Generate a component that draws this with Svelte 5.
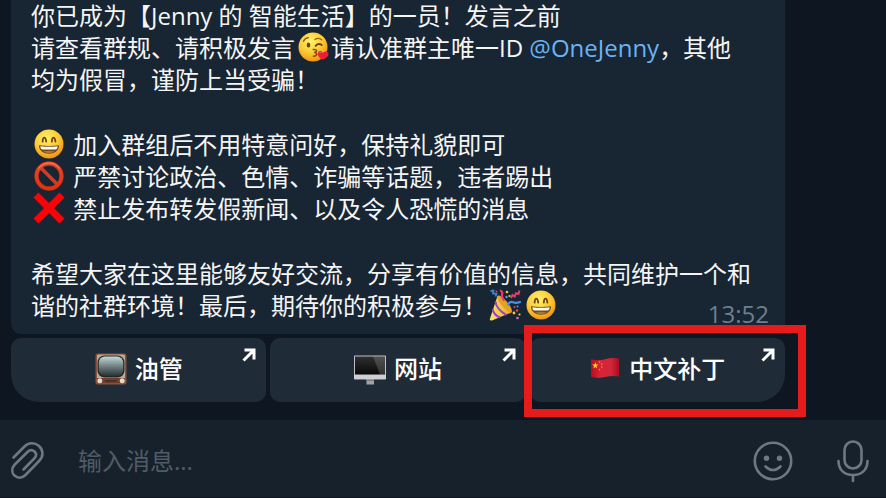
<script lang="ts">
  let draft = $state('');
</script>

{#snippet face()}
  <circle cx="16" cy="16" r="14.5" fill="url(#face-fill)" />
{/snippet}

{#snippet grin()}
  <svg class="emoji" viewBox="0 0 32 32" role="img" aria-label="😄">
    {@render face()}
    <path d="M9.6 13.6q.2-4 1.7-4t1.900 4M18.800 13.600q.2-4 1.700-4t1.900 4" fill="none" stroke="#704312" stroke-width="1.800" stroke-linecap="round" />
    <path d="M6 17.200q10 1.600 20 0c.2 5.500-4.500 8.500-10 8.500S5.800 22.700 6 17.200z" fill="#74481a" />
    <path d="M7.400 18.200q8.600 1.200 17.200 0c0 2-.6 2.700-1.600 3.200H9c-1-.5-1.600-1.200-1.600-3.200z" fill="#fffdf2" />
    <path d="M10 23.500q6-1.400 12 0-6 3-12 0z" fill="#a87935" />
  </svg>
{/snippet}

{#snippet kiss()}
  <svg class="emoji" viewBox="0 0 32 32" role="img" aria-label="😘">
    {@render face()}
    <path d="M6.500 10.300q1.500-3.400 5-3.600M18 8.500q3.500-2.500 6.500.2" fill="none" stroke="#96600d" stroke-width="1.300" stroke-linecap="round" />
    <ellipse cx="11.500" cy="14" rx="1.800" ry="2.500" fill="#69400e" />
    <path d="M18.600 14.800q3.200-3.300 6.200-.6" fill="none" stroke="#69400e" stroke-width="1.800" stroke-linecap="round" />
    <path d="M16.300 18.500c4-.5 4.500 2.300 1 2.900 3.500.3 3.200 3.700-.8 3.800" fill="none" stroke="#8c4a12" stroke-width="1.500" stroke-linecap="round" />
    <path d="M25.600 28.800c-4.600-2.600-5.300-5.200-4.500-7.200 1-2.200 3.700-1.900 4.600.4 1.600-2.100 4.600-2.200 5.600.1 1.100 2.600-1.500 4.700-5.700 6.700z" fill="#ee1c35" />
    <path d="M22.400 22q.8-1.200 1.800-.2" fill="none" stroke="#ff8290" stroke-width="1" />
  </svg>
{/snippet}

{#snippet forbidden()}
  <svg class="emoji" viewBox="0 0 32 32" role="img" aria-label="🚫">
    <circle cx="16" cy="16" r="12.500" fill="none" stroke="#b52810" stroke-width="4.400" />
    <path d="m7.500 7.500 17 17" stroke="#d83a20" stroke-width="3.600" />
    <circle cx="16" cy="16" r="12.500" fill="none" stroke="url(#ban-fill)" stroke-width="3.400" />
    <path d="M5.500 8.500Q9.500 3 16 3t10.500 5.500" fill="none" stroke="#f5a38c" stroke-width="1" opacity=".7" />
  </svg>
{/snippet}

{#snippet cross()}
  <svg class="emoji" viewBox="0 0 32 32" role="img" aria-label="❌">
    <path d="M.5 5.500 5.500.500 16 11 26.500.500l5 5L21 16l10.500 10.500-5 5L16 21 5.500 31.500l-5-5L11 16z" fill="#fb0207" />
  </svg>
{/snippet}

{#snippet party()}
  <svg class="emoji" viewBox="0 0 32 32" role="img" aria-label="🎉">
    <path d="M8.500 7 22.500 23.500 3 31.500q-2.500.5-2-2z" fill="url(#cone-fill)" />
    <path d="M6.500 12.500Q7 20 17.500 26M3.600 20q1 6 7.500 8.500" fill="none" stroke="#9a42c8" stroke-width="2" />
    <ellipse cx="15.600" cy="15" rx="3.200" ry="10.700" transform="rotate(-40 15.600 15)" fill="#e3a224" />
    <path d="M14.500 12c1-3-3-3-1.500-6.500S11 3 12 .800" fill="none" stroke="#e93b68" stroke-width="2.200" />
    <path d="M19 15.500q2-3.500 5-2.200t7-.3" fill="none" stroke="#4492e8" stroke-width="2.200" stroke-linecap="round" />
    <path d="m22 9 1.500-3 2.200 1.500L27 4.200l2.500.8 1-3.500" fill="none" stroke="#df406d" stroke-width="2" />
    <path d="m1.500 2 3-.5-.5 3 3.500.5-1 2.500" fill="none" stroke="#3982dc" stroke-width="1.800" />
    <g fill="#e9405f"><circle cx="7.500" cy="2.500" r="1" /><circle cx="28" cy="21.500" r="1.200" /><circle cx="25.500" cy="18" r="1" /></g>
    <g fill="#f8c53b"><circle cx="18" cy="3" r="1.300" /><circle cx="20.500" cy="7" r="1.100" /><circle cx="25" cy="24" r="1.400" /><circle cx="30.500" cy="25.500" r="1.100" /></g>
    <g fill="#4c9bee"><circle cx="17.500" cy="8" r="1.200" /><circle cx="28.500" cy="17.500" r="1" /></g>
    <circle cx="28.500" cy="29" r="1.300" fill="#d96dcc" />
  </svg>
{/snippet}

{#snippet tv()}
  <svg class="emoji" viewBox="0 0 32 32" aria-hidden="true">
    <rect x=".5" y=".5" width="31" height="31" rx="2.500" fill="#8b5140" />
    <path d="M2 3q0-1.500 1.500-1.500h25Q30 1.500 30 3v22H2z" fill="#b9aa96" />
    <path d="M2 25h28v5H2z" fill="#713e2d" />
    <rect x="2.500" y="2.500" width="27" height="22" rx="7" fill="#202829" />
    <rect x="3.800" y="3.500" width="24.400" height="19.500" rx="6" fill="url(#screen-fill)" />
    <path d="M10 27h12v2H10z" fill="#49322a" />
    <circle cx="4.800" cy="27.800" r="2.500" fill="#e7d9c0" />
    <circle cx="27.200" cy="27.800" r="2.500" fill="#e7d9c0" />
  </svg>
{/snippet}

{#snippet monitor()}
  <svg class="emoji" viewBox="0 0 32 32" aria-hidden="true">
    <path d="M12.500 26h7.500v5.500h-7.500z" fill="#a2a2a5" />
    <path d="M12.500 26h7.500v2h-7.500z" fill="#78787b" />
    <rect x="0" y="2.500" width="32" height="24" rx=".7" fill="#bfc0c4" />
    <path d="M1 3.500h30v18H1z" fill="url(#monitor-fill)" />
    <path d="M19 3.500h12v18h-5z" fill="#fff" opacity=".16" />
    <path d="M0 22h32v4H0z" fill="#cfcfd3" />
  </svg>
{/snippet}

{#snippet flag()}
  <svg class="emoji" viewBox="0 0 32 32" aria-hidden="true">
    <path d="M2 6.200q7 2 14 0t14-.7v18q-7-1-14 .6t-14 0z" fill="url(#flag-fill)" />
    <path d="m6.300 9.300.8 2.200 2.400.1-1.900 1.500.7 2.400-2-1.400-2 1.400.7-2.400-1.900-1.500 2.400-.1z" fill="#ffd52e" />
    <g fill="#e6962d"><circle cx="10.500" cy="9" r=".8" /><circle cx="12.800" cy="11" r=".8" /><circle cx="12.800" cy="14" r=".8" /><circle cx="10.500" cy="16.500" r=".8" /></g>
  </svg>
{/snippet}

{#snippet arrow()}
  <svg class="arrow" viewBox="0 0 14 14" aria-hidden="true">
    <path d="M1.500 12.500 11.500 2.500M2.500 2h9.500v9.500" fill="none" stroke="#fff" stroke-width="3" />
  </svg>
{/snippet}

<svg class="paints" aria-hidden="true">
  <defs>
    <radialGradient id="face-fill" cx=".42" cy=".3" r=".75">
      <stop offset="0" stop-color="#fff36b" /><stop offset=".55" stop-color="#fcc935" /><stop offset="1" stop-color="#ee8a10" />
    </radialGradient>
    <linearGradient id="ban-fill" x2="0" y2="1">
      <stop offset="0" stop-color="#e2492e" /><stop offset="1" stop-color="#dc3413" />
    </linearGradient>
    <linearGradient id="cone-fill">
      <stop offset="0" stop-color="#ffe36a" /><stop offset="1" stop-color="#e9a928" />
    </linearGradient>
    <linearGradient id="screen-fill" x2="0" y2="1">
      <stop offset="0" stop-color="#c2d9d8" /><stop offset=".5" stop-color="#718182" /><stop offset="1" stop-color="#293132" />
    </linearGradient>
    <linearGradient id="monitor-fill" x2="0" y2="1">
      <stop offset="0" stop-color="#303030" /><stop offset="1" stop-color="#090909" />
    </linearGradient>
    <linearGradient id="flag-fill">
      <stop offset="0" stop-color="#b90c1e" /><stop offset=".35" stop-color="#d92436" /><stop offset=".7" stop-color="#d1273a" /><stop offset="1" stop-color="#a90e20" />
    </linearGradient>
  </defs>
</svg>

<main>
  <section class="chat">
    <article class="bubble">
      <p>
        你已成为【Jenny 的 智能生活】的一员！发言之前<br />
        请查看群规、请积极发言{@render kiss()}请认准群主唯一ID <a href="#onejenny">@OneJenny</a>，其他<br />
        均为假冒，谨防上当受骗！
      </p>
      <p>
        {@render grin()} 加入群组后不用特意问好，保持礼貌即可<br />
        {@render forbidden()} 严禁讨论政治、色情、诈骗等话题，违者踢出<br />
        {@render cross()} 禁止发布转发假新闻、以及令人恐慌的消息
      </p>
      <p>
        希望大家在这里能够友好交流，分享有价值的信息，共同维护一个和<br />
        谐的社群环境！最后，期待你的积极参与！{@render party()}{@render grin()}
      </p>
      <time>13:52</time>
    </article>
    <div class="keyboard">
      <button type="button" class="first">{@render tv()}<span>油管</span>{@render arrow()}</button>
      <button type="button">{@render monitor()}<span>网站</span>{@render arrow()}</button>
      <div class="marked">
        <button type="button" class="last">{@render flag()}<span>中文补丁</span>{@render arrow()}</button>
      </div>
    </div>
  </section>

  <form class="composer" onsubmit={(e) => e.preventDefault()}>
    <button type="button" aria-label="添加附件">
      <svg width="36" height="40" viewBox="0 0 36 40">
        <path d="M3.500 16.500 14.500 5.500c4-4 10-4.500 14.500-.5 4.500 4.300 4.500 10.300.5 14.500L15.500 34c-3.500 3.500-8 3.300-11 .5-3-3-3-7.500.3-11L17.500 11c2.300-2.300 5-2.300 7-.5 2 2 2 4.700-.3 7L13.500 28.500" />
      </svg>
    </button>
    <input type="text" placeholder="输入消息..." aria-label="输入消息" bind:value={draft} />
    <button type="button" aria-label="表情">
      <svg width="40" height="40" viewBox="0 0 40 40">
        <circle cx="20" cy="20" r="18.200" />
        <circle class="dot" cx="13.500" cy="17.300" r="2.700" /><circle class="dot" cx="26.500" cy="17.300" r="2.700" />
        <path d="M12.500 25.500q7.500 7 15 0" />
      </svg>
    </button>
    <button type="button" aria-label="语音消息">
      <svg width="34" height="44" viewBox="0 0 34 44">
        <rect x="8.500" y="2.500" width="17" height="27" rx="8.500" />
        <path d="M2.500 22c0 9 6 14 14.500 14s14.500-5 14.500-14M17 36v6" />
      </svg>
    </button>
  </form>
</main>

<style>
  :global(body) {
    margin: 0;
    background: #0e1621;
  }
  main {
    display: flex;
    flex-direction: column;
    min-height: 100vh;
    box-sizing: border-box;
    border-bottom: 1px solid #0e1621;
    color: #f5f5f5;
    font: 24px/32px "Open Sans", "Noto Sans CJK SC", sans-serif;
  }
  button,
  input {
    margin: 0;
    padding: 0;
    border: 0;
    background: none;
    color: inherit;
    font: inherit;
  }
  button {
    cursor: pointer;
  }
  .paints {
    position: absolute;
    width: 0;
    height: 0;
  }
  .chat {
    flex: 1;
    display: flex;
    flex-direction: column;
    gap: 4px;
    padding: 0 101px 18px 11px;
  }
  .bubble {
    position: relative;
    display: flex;
    flex-direction: column;
    gap: 33px;
    padding: 0 20px 12px;
    border-radius: 0 0 10px 10px;
    background: #182533;
  }
  p {
    margin: 0;
  }
  a {
    color: #6ab3f3;
    text-decoration: none;
  }
  .emoji {
    width: 32px;
    height: 32px;
    flex: none;
  }
  p .emoji {
    margin: -1px 2px 1px;
    vertical-align: top;
  }
  time {
    position: absolute;
    right: 16px;
    bottom: 4px;
    color: #6d7f8f;
  }
  .keyboard {
    display: grid;
    grid-template-columns: repeat(3, 1fr);
    gap: 4px;
  }
  .keyboard button {
    position: relative;
    display: flex;
    align-items: center;
    justify-content: center;
    gap: 8px;
    width: 100%;
    height: 64px;
    padding-bottom: 2px;
    border-radius: 10px;
    background: #1f2c38;
    color: #fff;
    font-weight: 500;
  }
  .keyboard .first {
    border-bottom-left-radius: 28px;
  }
  .keyboard .last {
    border-bottom-right-radius: 28px;
  }
  .arrow {
    position: absolute;
    top: 10px;
    right: 10px;
    width: 14px;
    height: 14px;
  }
  .marked {
    position: relative;
  }
  .marked::after {
    content: "";
    position: absolute;
    inset: -13px -21px -15px -6px;
    border: 8px solid #e61b1b;
    pointer-events: none;
  }
  .composer {
    display: flex;
    align-items: center;
    gap: 32px;
    box-sizing: border-box;
    height: 77px;
    padding: 4px 16px 0 10px;
    background: #17212b;
  }
  .composer button {
    display: flex;
  }
  .composer button + button {
    margin-left: 11px;
  }
  .composer svg {
    fill: none;
    stroke: #6c7883;
    stroke-width: 2.6;
    stroke-linecap: round;
  }
  .composer .dot {
    fill: #6c7883;
    stroke: none;
  }
  input {
    flex: 1;
    min-width: 0;
    height: 40px;
    outline: none;
  }
  input::placeholder {
    color: #4f5b66;
    opacity: 1;
  }
</style>
